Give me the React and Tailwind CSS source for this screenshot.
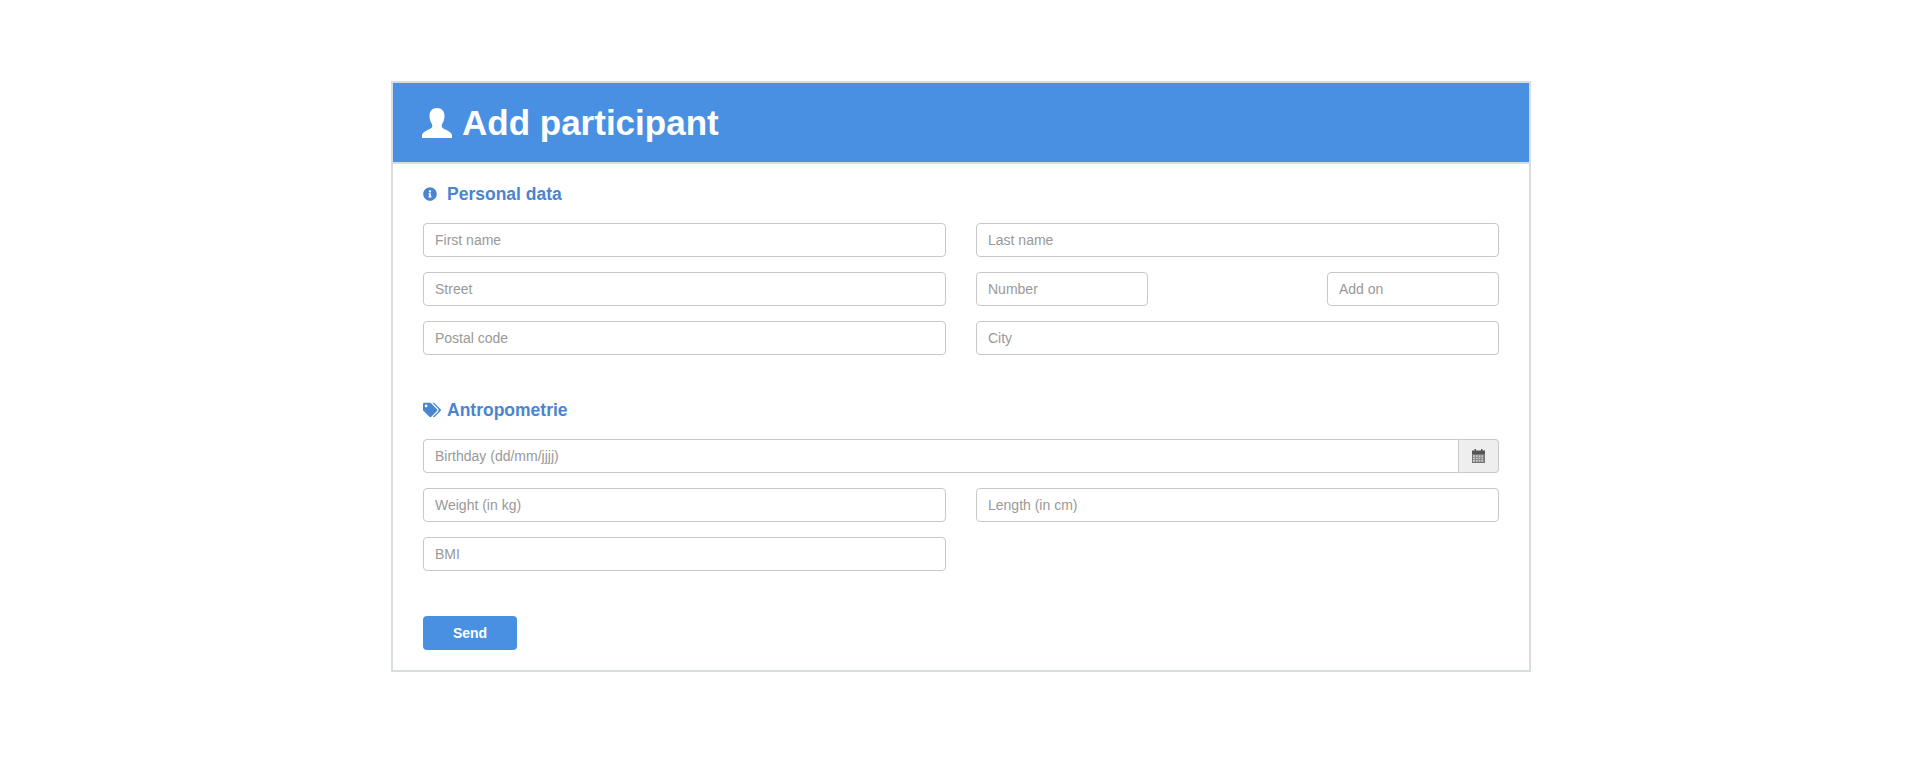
import { FaInfoCircle, FaTags } from "react-icons/fa";

function Field({ placeholder, className = "" }) {
  return (
    <input
      placeholder={placeholder}
      className={`h-[34px] rounded-[4px] border border-[#c8c8c8] bg-white px-[11px] text-sm text-[#555] outline-none placeholder:text-[#999] ${className}`}
    />
  );
}

function UserIcon() {
  return (
    <svg viewBox="0 0 30 30" className="h-[30px] w-[30px] fill-white">
      <path d="M15 0C10.200 0 7.500 3.200 7.500 7.800c0 3.400 1 6 2.300 8 .5.800.6 1.700.4 2.600-.3 1.300-1.600 2.200-3.700 3.100C3.200 23 .6 24.500 0 27v3h30v-3c-.6-2.500-3.200-4-6.500-5.500-2.100-.9-3.400-1.800-3.700-3.100-.2-.9-.1-1.800.4-2.600 1.300-2 2.300-4.600 2.300-8C22.500 3.200 19.800 0 15 0z" />
    </svg>
  );
}

function CalendarIcon() {
  const cols = [1, 3.75, 6.5, 9.25];
  const rows = [6.2, 8.6, 11];
  return (
    <svg viewBox="0 0 13 14" className="h-[14px] w-[13px]">
      <rect x="2.500" y="0" width="1.500" height="2" fill="#555" />
      <rect x="9" y="0" width="1.500" height="2" fill="#555" />
      <rect x="0" y="1.500" width="13" height="3.500" fill="#555" />
      <rect x="0" y="5" width="13" height="9" fill="#777" />
      {rows.map((y) =>
        cols.map((x) => <rect key={`${x}-${y}`} x={x} y={y} width="2" height="1.700" fill="#ccc" />)
      )}
    </svg>
  );
}

export default function App() {
  return (
    <div className="min-h-[769px] bg-white pt-[81px] font-['Liberation_Sans',Arial,sans-serif]">
      <div className="ml-[391px] w-[1140px] border-2 border-[#d8dde2]">
        <div className="flex h-[79px] items-center gap-[10px] bg-[#4a90e2] pl-[29px] text-white">
          <UserIcon />
          <h1 className="pt-[2px] text-[35px] font-bold">Add participant</h1>
        </div>

        <form className="border-t-2 border-[#d8dde2] px-[30px] pb-[20px] pt-[20px]">
          <h3 className="flex h-[20px] items-center gap-[10px] text-[17.5px] font-bold text-[#4a85d0]">
            <FaInfoCircle className="h-[14px] w-[14px]" />
            Personal data
          </h3>

          <div className="mt-[19px] flex flex-col gap-[15px]">
            <div className="grid grid-cols-2 gap-[30px]">
              <Field placeholder="First name" className="w-full" />
              <Field placeholder="Last name" className="w-full" />
            </div>
            <div className="grid grid-cols-2 gap-[30px]">
              <Field placeholder="Street" className="w-full" />
              <div className="flex justify-between">
                <Field placeholder="Number" className="w-[172px]" />
                <Field placeholder="Add on" className="w-[172px]" />
              </div>
            </div>
            <div className="grid grid-cols-2 gap-[30px]">
              <Field placeholder="Postal code" className="w-full" />
              <Field placeholder="City" className="w-full" />
            </div>
          </div>

          <h3 className="mt-[45px] flex h-[20px] items-center gap-[6px] text-[17.5px] font-bold text-[#4a85d0]">
            <FaTags className="h-[16px] w-[18px]" />
            Antropometrie
          </h3>

          <div className="mt-[19px] flex flex-col gap-[15px]">
            <div className="flex">
              <Field placeholder="Birthday (dd/mm/jjjj)" className="min-w-0 flex-1 rounded-r-none" />
              <span className="flex h-[34px] w-[40px] items-center justify-center rounded-r-[4px] border border-l-0 border-[#c8c8c8] bg-[#eee]">
                <CalendarIcon />
              </span>
            </div>
            <div className="grid grid-cols-2 gap-[30px]">
              <Field placeholder="Weight (in kg)" className="w-full" />
              <Field placeholder="Length (in cm)" className="w-full" />
            </div>
            <div className="grid grid-cols-2 gap-[30px]">
              <Field placeholder="BMI" className="w-full" />
            </div>
          </div>

          <button
            type="button"
            className="mt-[45px] h-[34px] w-[94px] rounded-[4px] bg-[#4a90e2] text-sm font-bold text-white"
          >
            Send
          </button>
        </form>
      </div>
    </div>
  );
}
